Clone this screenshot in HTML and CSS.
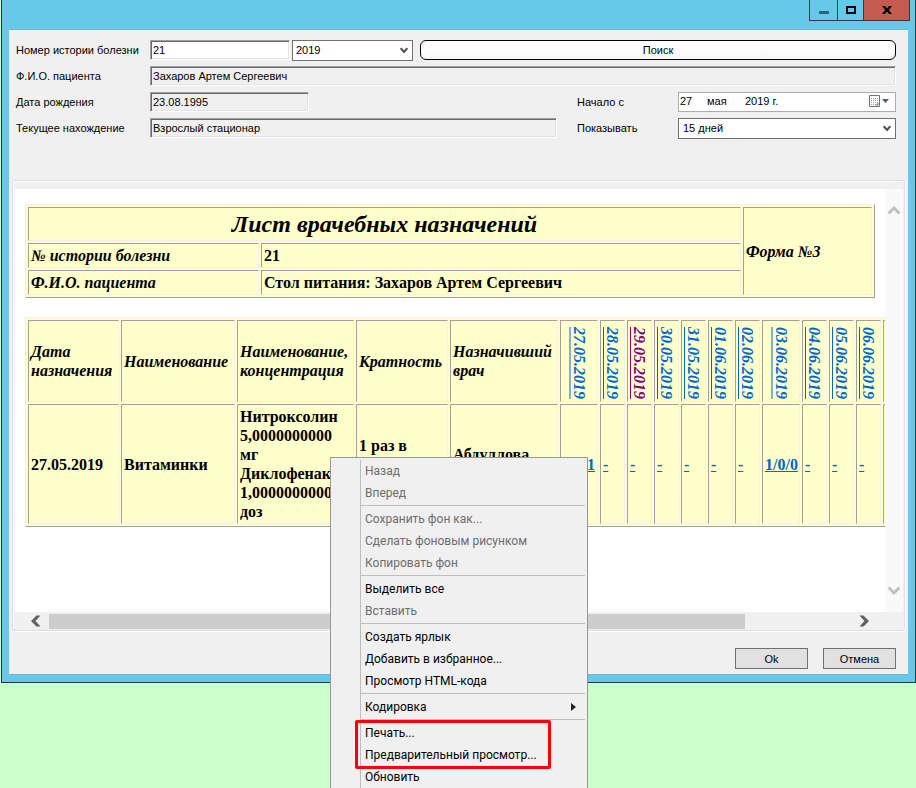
FILE: index.html
```html
<!DOCTYPE html>
<html lang="ru">
<head>
<meta charset="utf-8">
<title>Лист врачебных назначений</title>
<link rel="stylesheet" href="styles.css">
</head>
<body>
<main class="window">
  <header class="titlebar">
    <button class="caption" aria-label="Свернуть"><svg width="10" height="3"><path d="M0 0h10v3H0z" fill="#2d6579"/></svg></button>
    <button class="caption" aria-label="Развернуть"><svg width="10" height="8"><path d="M1 1h8v6h-8z" fill="none" stroke="#000" stroke-width="2"/></svg></button>
    <button class="caption caption-close" aria-label="Закрыть"><svg width="10" height="8"><path d="M0 0h3l2 2.500l2-2.500h3L6.800 4L10 8H7L5 5.500L3 8H0l3.200-4z" fill="#000"/></svg></button>
  </header>
  <div class="client">
    <form class="form">
      <div class="row">
        <label class="label" for="num">Номер истории болезни</label>
        <input class="field field-num" id="num" type="text" value="21">
        <select class="select select-year" aria-label="Год"><option>2019</option></select>
        <button class="search" type="button">Поиск</button>
      </div>
      <div class="row">
        <label class="label" for="fio">Ф.И.О. пациента</label>
        <input class="field field-grow" id="fio" type="text" readonly value="Захаров Артем Сергеевич">
      </div>
      <div class="row">
        <label class="label" for="birth">Дата рождения</label>
        <div class="cell"><input class="field field-birth" id="birth" type="text" readonly value="23.08.1995"></div>
        <label class="label label-right" for="day">Начало с</label>
        <div class="date">
          <input class="day" id="day" type="text" value="27">
          <input class="month" type="text" value="мая" aria-label="Месяц">
          <input class="year" type="text" value="2019 г." aria-label="Год начала">
          <button class="calendar" type="button" aria-label="Календарь">
            <svg width="21" height="12"><path d="M.5.500h10v11h-10z" fill="#fff" stroke="#7a706c"/><path d="M2 3.500h7M2 5.500h7M2 7.500h7M2 9.500h5" stroke="#8d9ab5" stroke-dasharray="1 1"/><path d="M8 11V9h2.500" stroke="#7a706c" fill="none"/><path d="M13 4h7l-3.500 4z" fill="#44607f"/></svg>
          </button>
        </div>
      </div>
      <div class="row">
        <label class="label" for="place">Текущее нахождение</label>
        <div class="cell"><input class="field field-place" id="place" type="text" readonly value="Взрослый стационар"></div>
        <label class="label label-right" for="show">Показывать</label>
        <select class="select select-days" id="show"><option>15 дней</option></select>
      </div>
    </form>

    <section class="viewer">
      <div class="document">
        <table class="sheet sheet-head">
          <colgroup><col class="c-name"><col><col class="c-form"></colgroup>
          <tr class="r-title"><th colspan="2" class="title">Лист врачебных назначений</th><th rowspan="3">Форма №3</th></tr>
          <tr><th>№ истории болезни</th><td>21</td></tr>
          <tr><th>Ф.И.О. пациента</th><td>Стол питания: Захаров Артем Сергеевич</td></tr>
        </table>
        <table class="sheet sheet-days">
          <colgroup><col class="w-date"><col class="w-name"><col class="w-conc"><col class="w-freq"><col class="w-doc"><col class="w-wide"><col span="6" class="w-day"><col class="w-wide"><col span="4" class="w-day"></colgroup>
          <tr class="r-dates">
            <th>Дата назначения</th><th>Наименование</th><th>Наименование, концентрация</th><th>Кратность</th><th>Назначивший врач</th>
            <th class="v"><a href="#">27.05.2019</a></th>
            <th class="v"><a href="#">28.05.2019</a></th>
            <th class="v"><a href="#" class="visited">29.05.2019</a></th>
            <th class="v"><a href="#">30.05.2019</a></th>
            <th class="v"><a href="#">31.05.2019</a></th>
            <th class="v"><a href="#">01.06.2019</a></th>
            <th class="v"><a href="#">02.06.2019</a></th>
            <th class="v"><a href="#">03.06.2019</a></th>
            <th class="v"><a href="#">04.06.2019</a></th>
            <th class="v"><a href="#">05.06.2019</a></th>
            <th class="v"><a href="#">06.06.2019</a></th>
            <th></th>
          </tr>
          <tr>
            <td>27.05.2019</td><td>Витаминки</td>
            <td>Нитроксолин 5,0000000000 мг Диклофенак 1,0000000000 доз</td>
            <td>1 раз в<br>&nbsp;<br>&nbsp;</td><td>Абдуллова<br>&nbsp;</td>
            <td class="end"><a href="#">1</a></td>
            <td><a href="#">-</a></td><td><a href="#">-</a></td><td><a href="#">-</a></td><td><a href="#">-</a></td><td><a href="#">-</a></td><td><a href="#">-</a></td>
            <td><a href="#">1/0/0</a></td>
            <td><a href="#">-</a></td><td><a href="#">-</a></td><td><a href="#">-</a></td><td></td>
          </tr>
        </table>
      </div>
      <div class="vscroll">
        <svg width="12" height="10"><path d="M.5 8.500L6 3l5.500 5.500" fill="none" stroke="#c0c0c0" stroke-width="3"/></svg>
        <svg width="12" height="10"><path d="M.5 1.500L6 7l5.500-5.500" fill="none" stroke="#c0c0c0" stroke-width="3"/></svg>
      </div>
      <div class="hscroll">
        <svg width="10" height="12"><path d="M0 6L5.500 0.500H9.500L4.500 6L9.500 11.500H5.500z" fill="#606060"/></svg>
        <div class="thumb"></div>
        <svg width="10" height="12"><path d="M10 6L4.500 0.500H0.500L5.500 6L0.500 11.500H4.500z" fill="#606060"/></svg>
      </div>
    </section>

    <footer class="footer">
      <button class="push">Ok</button>
      <button class="push">Отмена</button>
    </footer>
  </div>
</main>

<nav class="menu" aria-label="Контекстное меню">
  <div class="group">
    <button class="item" disabled>Назад</button>
    <button class="item" disabled>Вперед</button>
  </div>
  <div class="group">
    <button class="item" disabled>Сохранить фон как...</button>
    <button class="item" disabled>Сделать фоновым рисунком</button>
    <button class="item" disabled>Копировать фон</button>
  </div>
  <div class="group">
    <button class="item">Выделить все</button>
    <button class="item" disabled>Вставить</button>
  </div>
  <div class="group">
    <button class="item">Создать ярлык</button>
    <button class="item">Добавить в избранное...</button>
    <button class="item">Просмотр HTML-кода</button>
  </div>
  <div class="group">
    <button class="item">Кодировка<svg width="5" height="8"><path d="M0 0l5 4l-5 4z" fill="#222"/></svg></button>
  </div>
  <div class="group">
    <div class="marked">
      <button class="item">Печать...</button>
      <button class="item">Предварительный просмотр...</button>
    </div>
    <button class="item">Обновить</button>
  </div>
</nav>
</body>
</html>
```
FILE: styles.css
```css
* { box-sizing: border-box; }

body {
  margin: 0;
  min-height: 100vh;
  position: relative;
  overflow: hidden;
  background: #ccffcc;
  color: #000;
  font: 11px/14px "Liberation Sans", Arial, sans-serif;
}

button, input, select { font: inherit; color: inherit; margin: 0; }
svg { display: block; flex: none; }

/* window frame */
.window {
  margin-left: 1px;
  padding: 0 7px 7px;
  background: #66c9ea;
  border: solid #26343c;
  border-width: 0 1px 1px;
}

.titlebar {
  display: flex;
  justify-content: flex-end;
  align-items: flex-start;
  height: 29px;
  margin-right: -2px;
}
.caption {
  display: flex;
  align-items: center;
  justify-content: center;
  width: 27px;
  height: 21px;
  margin-left: -1px;
  padding: 0;
  background: #66c9ea;
  border: 1px solid #24404a;
  border-top: 0;
}
.caption:first-child { width: 29px; padding-top: 5px; }
.caption-close { width: 47px; background: #c35b50; border-color: #5a2a2a; }

.client {
  background: #f0f0f0;
  border: solid #7fb2c6;
  border-width: 1px 0;
}

/* patient form */
.form {
  display: flex;
  flex-direction: column;
  gap: 6px;
  padding: 10px 12px 42px 7px;
}
.row { display: flex; align-items: center; height: 20px; }
.label { flex: none; width: 134px; }
.label-right { width: 101px; }
.cell { flex: 1; display: flex; }

.field {
  height: 20px;
  padding: 0 2px 1px;
  background: #fff;
  border: 1px solid;
  border-color: #a0a0a0 #fff #fff #a0a0a0;
  border-radius: 0;
  box-shadow: inset 1px 1px #696969, inset -1px -1px #e3e3e3;
  outline: 0;
}
.field:read-only { background: #f0f0f0; }
.field-num { width: 140px; }
.field-grow { flex: 1; }
.field-birth { width: 159px; }
.field-place { width: 407px; }

.select {
  flex: none;
  height: 21px;
  padding: 0 18px 0 4px;
  appearance: none;
  border: 1px solid #707070;
  border-radius: 0;
  background: #fff url("data:image/svg+xml,%3Csvg xmlns='http://www.w3.org/2000/svg' width='8' height='7'%3E%3Cpath d='M.7 1.200L4 5L7.300 1.200' fill='none' stroke='%23505050' stroke-width='2'/%3E%3C/svg%3E") no-repeat right 4px center;
}
.select-year { width: 121px; margin: 0 7px 0 2px; padding-left: 3px; }
.select-days { width: 218px; }

.search {
  flex: 1;
  height: 20px;
  padding: 0;
  background: linear-gradient(#fff, #f8f8f8);
  border: 1px solid #000;
  border-radius: 6px;
}

.date {
  display: flex;
  flex: none;
  width: 218px;
  height: 20px;
  padding: 0 5px 2px 1px;
  background: #fff;
  border: 1px solid #abadb3;
}
.date input { min-width: 0; padding: 0; border: 0; background: none; outline: 0; }
.day { width: 27px; }
.month { width: 38px; }
.year { flex: 1; }
.calendar { display: flex; align-items: center; padding: 0; border: 0; background: none; }

/* embedded document with scroll bars */
.viewer {
  display: grid;
  grid-template-columns: minmax(0, 1fr) 18px;
  grid-template-rows: 423px 18px;
  margin: 0 3px;
  padding: 8px 1px 0 2px;
  border: 1px solid #d5dfe5;
  border-radius: 3px;
  box-shadow: inset 1px 1px #fff, 1px 1px #fff;
}
.document { padding: 15px 10px; overflow: hidden; background: #fff; }
.vscroll {
  display: flex;
  flex-direction: column;
  justify-content: space-between;
  align-items: center;
  padding: 16px 0;
  background: #f9f9f9;
}
.hscroll {
  grid-column: 1 / -1;
  display: flex;
  align-items: center;
  justify-content: space-between;
  padding: 0 34px 0 16px;
}
.thumb { width: 83%; height: 15px; margin: 0 auto 0 8px; background: #cdcdcd; }

.sheet {
  table-layout: fixed;
  border-collapse: separate;
  border-spacing: 2px;
  background: #ffffcc;
  border: 1px solid;
  border-color: #f0f0f0 #a0a0a0 #a0a0a0 #f0f0f0;
  font: bold 16px/19px "Liberation Serif", "Times New Roman", serif;
}
.sheet th, .sheet td {
  padding: 2px;
  border: 1px solid;
  border-color: #a0a0a0 #f0f0f0 #f0f0f0 #a0a0a0;
  text-align: left;
  vertical-align: middle;
}
.sheet th { font-style: italic; }
.sheet-head { width: 100%; margin-bottom: 19px; }
.c-name { width: 231px; }
.c-form { width: 129px; }
.r-title { height: 34px; }
.sheet .title { text-align: center; font-size: 24px; line-height: 28px; }

.sheet-days { width: 886px; }
.w-date { width: 91px; }
.w-name { width: 114px; }
.w-conc { width: 117px; }
.w-freq { width: 92px; }
.w-doc { width: 108px; }
.w-wide { width: 38px; }
.w-day { width: 25px; }
.r-dates { height: 82px; }
.sheet .v { vertical-align: bottom; text-align: center; }
.v a { display: inline-block; writing-mode: vertical-rl; vertical-align: bottom; }
.sheet .end { text-align: right; }
.sheet a { color: #0066cc; text-decoration-thickness: 1px; }
.sheet a.visited { color: #800080; }

.footer {
  display: flex;
  justify-content: flex-end;
  gap: 15px;
  padding: 17px 12px 5px;
}
.push {
  width: 73px;
  height: 21px;
  padding: 0;
  background: #e1e1e1;
  border: 1px solid #707070;
}

/* context menu */
.menu {
  position: absolute;
  top: 457px;
  left: 330px;
  bottom: 0;
  width: 258px;
  padding: 2px;
  overflow: hidden;
  background: #f0f0f0;
  border: 1px solid #979797;
  border-bottom: 0;
  font: 12px/22px Roboto, "Segoe UI", sans-serif;
}
.group { margin-left: 27px; border-left: 1px solid #bdbdbd; }
.group + .group { padding-top: 4px; background: linear-gradient(#bdbdbd, #bdbdbd) 0 1px / 100% 1px no-repeat; }
.item {
  display: flex;
  align-items: center;
  justify-content: space-between;
  width: 100%;
  height: 22px;
  padding: 0 9px 0 4px;
  border: 0;
  background: none;
  text-align: left;
}
.item:disabled { color: #6d6d6d; }
.marked { position: relative; }
.marked::after {
  content: "";
  position: absolute;
  inset: -2px 34px -3px -6px;
  border: 3px solid #ff0000;
  border-radius: 2px;
  pointer-events: none;
}
```
